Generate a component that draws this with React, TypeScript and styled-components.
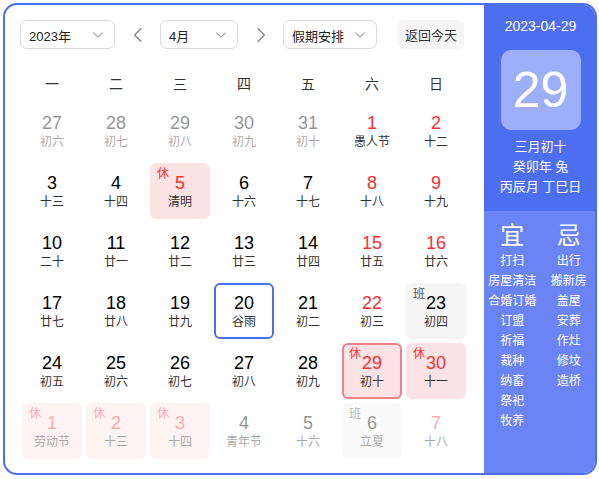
import React from 'react';
import styled, { createGlobalStyle, css } from 'styled-components';

interface Day {
  n: number;
  lunar: string;
  other?: boolean;
  red?: boolean;
  tag?: '休' | '班';
  today?: boolean;
  selected?: boolean;
}

const weeks: Day[][] = [
  [
    { n: 27, lunar: '初六', other: true },
    { n: 28, lunar: '初七', other: true },
    { n: 29, lunar: '初八', other: true },
    { n: 30, lunar: '初九', other: true },
    { n: 31, lunar: '初十', other: true },
    { n: 1, lunar: '愚人节', red: true },
    { n: 2, lunar: '十二', red: true },
  ],
  [
    { n: 3, lunar: '十三' },
    { n: 4, lunar: '十四' },
    { n: 5, lunar: '清明', red: true, tag: '休' },
    { n: 6, lunar: '十六' },
    { n: 7, lunar: '十七' },
    { n: 8, lunar: '十八', red: true },
    { n: 9, lunar: '十九', red: true },
  ],
  [
    { n: 10, lunar: '二十' },
    { n: 11, lunar: '廿一' },
    { n: 12, lunar: '廿二' },
    { n: 13, lunar: '廿三' },
    { n: 14, lunar: '廿四' },
    { n: 15, lunar: '廿五', red: true },
    { n: 16, lunar: '廿六', red: true },
  ],
  [
    { n: 17, lunar: '廿七' },
    { n: 18, lunar: '廿八' },
    { n: 19, lunar: '廿九' },
    { n: 20, lunar: '谷雨', selected: true },
    { n: 21, lunar: '初二' },
    { n: 22, lunar: '初三', red: true },
    { n: 23, lunar: '初四', tag: '班' },
  ],
  [
    { n: 24, lunar: '初五' },
    { n: 25, lunar: '初六' },
    { n: 26, lunar: '初七' },
    { n: 27, lunar: '初八' },
    { n: 28, lunar: '初九' },
    { n: 29, lunar: '初十', red: true, tag: '休', today: true },
    { n: 30, lunar: '十一', red: true, tag: '休' },
  ],
  [
    { n: 1, lunar: '劳动节', other: true, red: true, tag: '休' },
    { n: 2, lunar: '十三', other: true, red: true, tag: '休' },
    { n: 3, lunar: '十四', other: true, red: true, tag: '休' },
    { n: 4, lunar: '青年节', other: true },
    { n: 5, lunar: '十六', other: true },
    { n: 6, lunar: '立夏', other: true, tag: '班' },
    { n: 7, lunar: '十八', other: true, red: true },
  ],
];

const weekdays = ['一', '二', '三', '四', '五', '六', '日'];
const yi = ['打扫', '房屋清洁', '合婚订婚', '订盟', '祈福', '裁种', '纳畜', '祭祀', '牧养'];
const ji = ['出行', '搬新房', '盖屋', '安葬', '作灶', '修坟', '造桥'];

const GlobalStyle = createGlobalStyle`
  * { box-sizing: border-box; }
  body {
    margin: 0;
    background: #fff;
    font-family: "Liberation Sans", "Noto Sans CJK SC", sans-serif;
  }
`;

const Chevron = ({ dir = 'down', size = 14, color = '#a0a3ab' }: { dir?: string; size?: number; color?: string }) => {
  const d = dir === 'down' ? 'M3 5.5l5 5 5-5' : dir === 'left' ? 'M10.5 2.5l-5.5 5.5 5.5 5.5' : 'M5.5 2.5l5.5 5.5-5.5 5.5';
  return (
    <svg width={size} height={size} viewBox="0 0 16 16" fill="none">
      <path d={d} stroke={color} strokeWidth="1.3" strokeLinecap="round" strokeLinejoin="round" />
    </svg>
  );
};

const App = () => {
  return (
    <>
      <GlobalStyle />
      <Frame>
        <Main>
          <Toolbar>
            <Select $w={95}>
              <span>2023年</span>
              <Chevron />
            </Select>
            <Arrow><Chevron dir="left" size={18} color="#888" /></Arrow>
            <Select $w={78}>
              <span>4月</span>
              <Chevron />
            </Select>
            <Arrow><Chevron dir="right" size={18} color="#888" /></Arrow>
            <Select $w={94}>
              <span>假期安排</span>
              <Chevron />
            </Select>
            <TodayButton>返回今天</TodayButton>
          </Toolbar>
          <WeekHeader>
            {weekdays.map((w) => (
              <WeekDay key={w}>{w}</WeekDay>
            ))}
          </WeekHeader>
          <Grid>
            {weeks.flat().map((d, i) => (
              <Cell
                key={i}
                $other={!!d.other}
                $holiday={d.tag === '休'}
                $work={d.tag === '班'}
                $today={!!d.today}
                $selected={!!d.selected}
              >
                {d.tag && <Tag $rest={d.tag === '休'}>{d.tag}</Tag>}
                <Num $red={!!d.red}>{d.n}</Num>
                <Lunar>{d.lunar}</Lunar>
              </Cell>
            ))}
          </Grid>
        </Main>
        <Side>
          <SideTop>
            <DateLine>2023-04-29</DateLine>
            <BigDay>29</BigDay>
            <LunarInfo>
              <div>三月初十</div>
              <div>癸卯年 兔</div>
              <div>丙辰月 丁巳日</div>
            </LunarInfo>
          </SideTop>
          <SideBottom>
            <Column>
              <Head>宜</Head>
              {yi.map((t) => (
                <Item key={t}>{t}</Item>
              ))}
            </Column>
            <Column>
              <Head>忌</Head>
              {ji.map((t) => (
                <Item key={t}>{t}</Item>
              ))}
            </Column>
          </SideBottom>
        </Side>
      </Frame>
    </>
  );
};

const Frame = styled.div`
  display: flex;
  margin: 3px 0 0 3px;
  width: 594px;
  height: 472px;
  border: 2px solid #4e6ef2;
  border-radius: 14px;
  overflow: hidden;
  background: #fff;
`;

const Main = styled.div`
  flex: 1;
  padding: 15px 13px 0 15px;
`;

const Toolbar = styled.div`
  display: flex;
  align-items: center;
  height: 29px;
`;

const Select = styled.div<{ $w: number }>`
  display: flex;
  align-items: center;
  justify-content: space-between;
  width: ${(p) => p.$w}px;
  height: 29px;
  padding: 0 9px 0 8px;
  border: 1px solid #d7d9e0;
  border-radius: 7px;
  font-size: 13px;
  color: #222;
  span { padding-top: 1px; }
`;

const Arrow = styled.div`
  display: flex;
  align-items: center;
  justify-content: center;
  width: 21px;
  margin: 0 12px;
`;

const TodayButton = styled.div`
  display: flex;
  align-items: center;
  margin-left: 21px;
  height: 29px;
  padding: 0 7px;
  background: #f5f5f6;
  border-radius: 6px;
  font-size: 13px;
  color: #333;
`;

const WeekHeader = styled.div`
  display: grid;
  grid-template-columns: repeat(7, 64px);
  margin-top: 16px;
  height: 36px;
`;

const WeekDay = styled.div`
  display: flex;
  align-items: center;
  justify-content: center;
  font-size: 14px;
  color: #333;
`;

const Grid = styled.div`
  display: grid;
  grid-template-columns: repeat(7, 64px);
  grid-auto-rows: 60px;
`;

const Cell = styled.div<{ $other: boolean; $holiday: boolean; $work: boolean; $today: boolean; $selected: boolean }>`
  position: relative;
  display: flex;
  flex-direction: column;
  align-items: center;
  justify-content: center;
  margin: 2px;
  border-radius: 6px;
  border: 2px solid transparent;
  ${(p) => p.$holiday && css`background: #fde3e4;`}
  ${(p) => p.$work && css`background: #f5f5f6;`}
  ${(p) => p.$today && css`border-color: #ef8189;`}
  ${(p) => p.$selected && css`border-color: #4e6ef2;`}
  ${(p) => p.$other && css`opacity: 0.42;`}
`;

const Tag = styled.span<{ $rest: boolean }>`
  position: absolute;
  left: 5px;
  top: 2px;
  font-size: 12px;
  line-height: 14px;
  color: ${(p) => (p.$rest ? '#f73131' : '#555')};
`;

const Num = styled.div<{ $red: boolean }>`
  font-size: 18px;
  line-height: 22px;
  color: ${(p) => (p.$red ? '#f73131' : '#000')};
`;

const Lunar = styled.div`
  font-size: 12px;
  line-height: 16px;
  color: #333;
`;

const Side = styled.div`
  display: flex;
  flex-direction: column;
  width: 113px;
  margin-right: -2px;
`;

const SideTop = styled.div`
  display: flex;
  flex-direction: column;
  align-items: center;
  height: 206px;
  padding-top: 12px;
  background: #4e6ef2;
  color: #fff;
`;

const DateLine = styled.div`
  font-size: 14px;
  line-height: 18px;
`;

const BigDay = styled.div`
  display: flex;
  align-items: center;
  justify-content: center;
  width: 80px;
  height: 80px;
  margin-top: 15px;
  border-radius: 10px;
  background: rgba(255, 255, 255, 0.45);
  font-size: 50px;
  color: #fff;
`;

const LunarInfo = styled.div`
  margin-top: 7px;
  font-size: 13px;
  line-height: 20px;
  text-align: center;
`;

const SideBottom = styled.div`
  flex: 1;
  display: grid;
  grid-template-columns: 1fr 1fr;
  padding-top: 10px;
  background: #6a84f5;
  color: #fff;
`;

const Column = styled.div`
  display: flex;
  flex-direction: column;
  align-items: center;
`;

const Head = styled.div`
  font-size: 24px;
  line-height: 30px;
`;

const Item = styled.div`
  font-size: 12px;
  line-height: 20px;
  white-space: nowrap;
`;

export default App;
